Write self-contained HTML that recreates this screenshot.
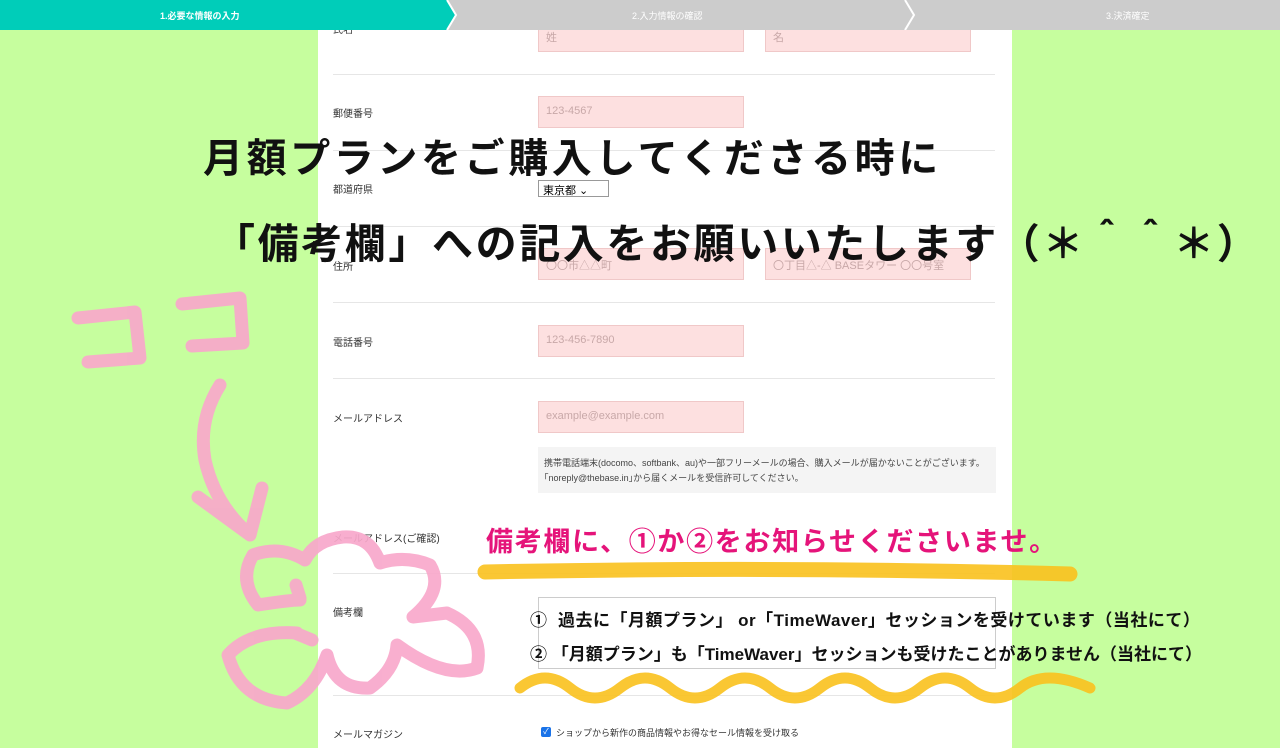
<!DOCTYPE html>
<html><head><meta charset="utf-8"><style>
*{margin:0;padding:0;box-sizing:border-box}
body{width:1280px;height:748px;overflow:hidden;background:#c6fe9e;font-family:"Liberation Sans","Noto Sans CJK JP",sans-serif;position:relative}
.panel{position:absolute;left:318px;top:0;width:694px;height:748px;background:#fff}
.bar{position:absolute;left:0;top:0;width:1280px;height:30px;background:#cccccc}
.lab{position:absolute;left:333px;font-size:10px;color:#333}
.inp{position:absolute;background:#fde0e0;border:1px solid #f0c8c8;font-size:11px;color:#c8a8a8;padding:8px 7px}
.sep{position:absolute;left:333px;width:662px;height:1px;background:#e6e6e6}
.a{position:absolute;white-space:nowrap}
</style></head><body>
<div class="panel"></div>
<div class="sep" style="top:74px"></div>
<div class="sep" style="top:150px"></div>
<div class="sep" style="top:226px"></div>
<div class="sep" style="top:302px"></div>
<div class="sep" style="top:378px"></div>
<div class="sep" style="top:573px"></div>
<div class="sep" style="top:695px"></div>
<div class="lab" style="top:21px">氏名</div>
<div class="lab" style="top:105px">郵便番号</div>
<div class="lab" style="top:181px">都道府県</div>
<div class="lab" style="top:258px">住所</div>
<div class="lab" style="top:334px">電話番号</div>
<div class="lab" style="top:410px">メールアドレス</div>
<div class="lab" style="top:530px">メールアドレス(ご確認)</div>
<div class="lab" style="top:604px">備考欄</div>
<div class="lab" style="top:726px">メールマガジン</div>
<div class="inp" style="left:538px;top:20px;width:206px;height:32px">姓</div>
<div class="inp" style="left:765px;top:20px;width:206px;height:32px">名</div>
<div class="inp" style="left:538px;top:96px;width:206px;height:32px">123-4567</div>
<div class="a" style="left:538px;top:180px;width:71px;height:17px;border:1px solid #999;font-size:11px;padding:1px 4px;background:#fff">東京都 ⌄</div>
<div class="inp" style="left:538px;top:248px;width:206px;height:32px">〇〇市△△町</div>
<div class="inp" style="left:765px;top:248px;width:206px;height:32px">〇丁目△-△ BASEタワー 〇〇号室</div>
<div class="inp" style="left:538px;top:325px;width:206px;height:32px">123-456-7890</div>
<div class="inp" style="left:538px;top:401px;width:206px;height:32px">example@example.com</div>
<div class="a" style="left:538px;top:447px;width:458px;height:46px;background:#f4f4f4;font-size:9px;color:#444;padding:9px 6px;line-height:15px;white-space:normal">携帯電話端末(docomo、softbank、au)や一部フリーメールの場合、購入メールが届かないことがございます。｢noreply@thebase.in｣から届くメールを受信許可してください。</div>
<div class="a" style="left:538px;top:597px;width:458px;height:72px;border:1px solid #ccc;background:#fff"></div>
<div class="a" style="left:541px;top:727px;width:10px;height:10px;background:#1a73e8;border-radius:2px;color:#fff;font-size:8px;text-align:center;line-height:10px">✓</div>
<div class="a" style="left:556px;top:726px;font-size:9px;color:#333">ショップから新作の商品情報やお得なセール情報を受け取る</div>
<div class="bar"></div>
<svg class="a" style="left:0;top:0" width="1280" height="30"><polygon points="0,0 447,0 456,15 447,30 0,30" fill="#00cdb9"/><polyline points="447,0 456,15 447,30" fill="none" stroke="#fff" stroke-width="2"/><polyline points="905,0 914,15 905,30" fill="none" stroke="#fff" stroke-width="2"/></svg>
<div class="a" style="left:160px;top:9px;font-size:9px;color:#fff;font-weight:bold">1.必要な情報の入力</div>
<div class="a" style="left:632px;top:9px;font-size:9px;color:#fff">2.入力情報の確認</div>
<div class="a" style="left:1106px;top:9px;font-size:9px;color:#fff">3.決済確定</div>
<svg class="a" style="left:0;top:0" width="1280" height="748" fill="none" stroke-linecap="round" stroke-linejoin="round">
<g stroke="#f8a8cb" stroke-width="13" opacity="0.92">
<path d="M78 318 L135 312 L140 358 L88 362"/>
<path d="M182 304 L240 298 L243 343 L192 346"/>
<path d="M220 385 Q198 420 205 460 Q215 505 250 535 M198 497 L250 535 L262 488"/>
<path d="M297 633 Q250 630 228 655 Q240 700 287 703 Q315 690 327 655 Q335 690 370 688 Q395 670 397 645 Q445 680 477 668 Q485 630 447 613 L413 617 Q445 590 430 565 Q405 555 380 563 Q370 535 343 537 Q315 540 305 560 Q280 545 253 555 Q238 580 258 605 Q290 600 300 600"/>
<path d="M300 598 L296 585 M312 640 L295 633"/>
</g>
<path d="M485 572 Q780 566 1070 574" stroke="#f9c11d" stroke-width="15" opacity="0.9"/>
<path d="M520 688 Q545 668 570 688 T620 688 T670 688 T720 688 T770 688 T820 688 T870 688 T920 688 T970 688 T1020 688 T1090 688" stroke="#f9c11d" stroke-width="11" opacity="0.9"/>
</svg>
<div class="a" style="left:203px;top:126px;font-size:40px;font-weight:bold;color:#111;letter-spacing:3.6px">月額プランをご購入してくださる時に</div>
<div class="a" style="left:214px;top:210px;font-size:41px;font-weight:bold;color:#111;letter-spacing:2.6px">「備考欄」への記入をお願いいたします（＊＾＾＊）</div>
<div class="a" style="left:486px;top:520px;font-size:27px;font-weight:bold;color:#e5147a;letter-spacing:1.7px">備考欄に、①か②をお知らせくださいませ。</div>
<div class="a" style="left:530px;top:606px;font-size:17px;font-weight:bold;color:#111;letter-spacing:0.5px">①&nbsp; 過去に「月額プラン」 or「TimeWaver」セッションを受けています（当社にて）</div>
<div class="a" style="left:530px;top:640px;font-size:17px;font-weight:bold;color:#111">② 「月額プラン」も「TimeWaver」セッションも受けたことがありません（当社にて）</div>
</body></html>
